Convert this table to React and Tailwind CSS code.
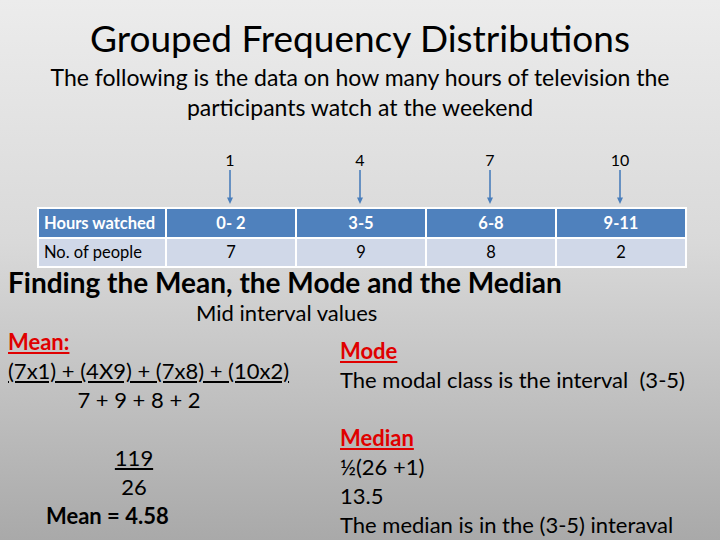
const cols = [
  { mid: "1", range: "0- 2", people: "7" },
  { mid: "4", range: "3-5", people: "9" },
  { mid: "7", range: "6-8", people: "8" },
  { mid: "10", range: "9-11", people: "2" },
];

function Arrow() {
  return (
    <svg width="8" height="34" viewBox="0 0 8 34" className="mx-auto block">
      <line x1="4" y1="0" x2="4" y2="29" stroke="#4a7ebb" strokeWidth="1.6" />
      <path d="M1 27.5 L4 34 L7 27.5 Z" fill="#4a7ebb" />
    </svg>
  );
}

export default function App() {
  return (
    <main
      className="flex h-[540px] w-[720px] flex-col overflow-hidden bg-[linear-gradient(180deg,#ececec_0%,#d9d9d9_45%,#a9a9a9_100%)] text-black"
      style={{ fontFamily: "Lato, 'Open Sans', sans-serif" }}
    >
      <h1 className="mt-[16px] text-center text-[37px] leading-[44px]">
        Grouped Frequency Distributions
      </h1>
      <p className="mx-auto mt-[2px] w-[700px] text-center text-[23px] leading-[30px]">
        The following is the data on how many hours of television the
        <br />
        participants watch at the weekend
      </p>

      <div className="ml-[37px] mt-[28px] w-[648px]">
        <div className="grid grid-cols-[128px_130px_130px_130px_130px]">
          <div />
          {cols.map((c) => (
            <div key={c.mid} className="flex flex-col items-center">
              <span className="text-[16px] leading-[20px]">{c.mid}</span>
              <Arrow />
            </div>
          ))}
        </div>
        <table className="mt-[3px] w-[648px] table-fixed border-collapse text-[16.5px]">
          <colgroup>
            <col className="w-[128px]" />
            <col className="w-[130px]" />
            <col className="w-[130px]" />
            <col className="w-[130px]" />
            <col className="w-[130px]" />
          </colgroup>
          <tbody>
            <tr className="h-[30px] bg-[#4f81bd] font-bold text-white">
              <td className="border-2 border-white pl-[5px]">Hours watched</td>
              {cols.map((c) => (
                <td key={c.range} className="border-2 border-white text-center">
                  {c.range}
                </td>
              ))}
            </tr>
            <tr className="h-[29px] bg-[#d0d8e8]">
              <td className="border-2 border-white pl-[5px]">No. of people</td>
              {cols.map((c) => (
                <td key={c.range} className="border-2 border-white text-center">
                  {c.people}
                </td>
              ))}
            </tr>
          </tbody>
        </table>
      </div>

      <h2 className="ml-[8px] mt-[-1px] text-[28px] font-bold leading-[30px]">
        Finding the Mean, the Mode and the Median
      </h2>
      <p className="ml-[196px] mt-[2px] text-[22px] leading-[28px]">Mid interval values</p>

      <div className="flex text-[22px] leading-[29px]">
        <div className="ml-[8px] w-[300px]">
          <p className="font-bold text-[#e00000] underline">Mean:</p>
          <p className="underline">(7x1) + (4X9) + (7x8) + (10x2)</p>
          <p className="w-[262px] text-center">7 + 9 + 8 + 2</p>
          <div className="mt-[29px] w-[252px] text-center">
            <p className="underline">119</p>
            <p>26</p>
          </div>
          <p className="ml-[38px] font-bold">Mean = 4.58</p>
        </div>
        <div className="ml-[32px] mt-[9px]">
          <p className="font-bold text-[#e00000] underline">Mode</p>
          <p>The modal class is the interval&nbsp; (3-5)</p>
          <p>&nbsp;</p>
          <p className="font-bold text-[#e00000] underline">Median</p>
          <p>½(26 +1)</p>
          <p>13.5</p>
          <p>The median is in the (3-5) interaval</p>
        </div>
      </div>
    </main>
  );
}
